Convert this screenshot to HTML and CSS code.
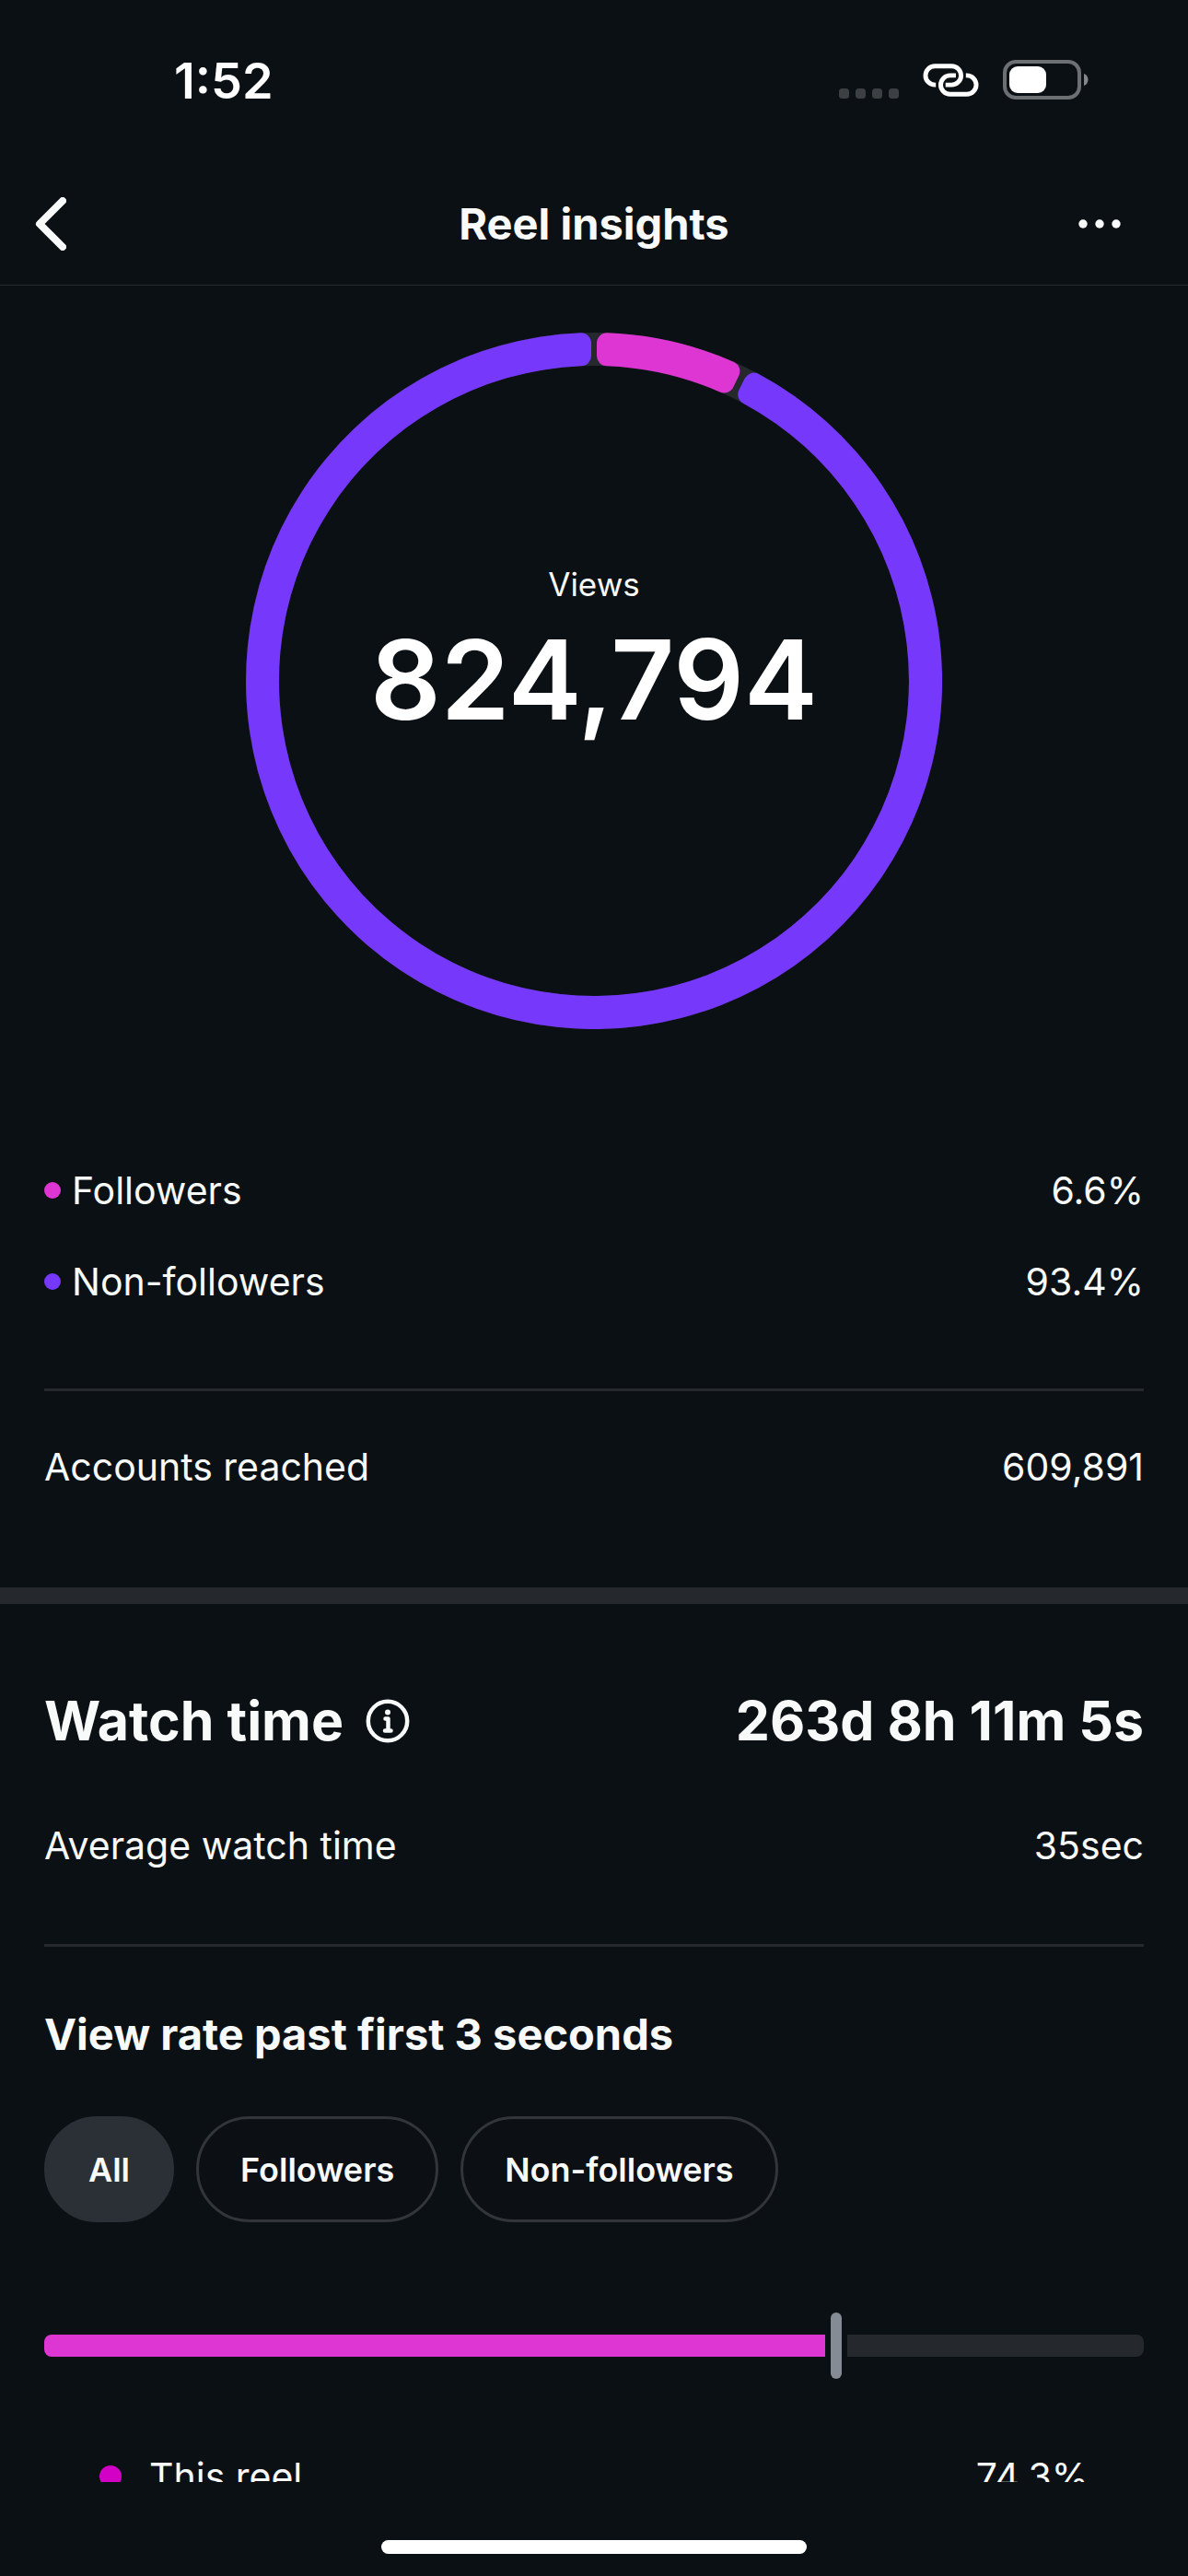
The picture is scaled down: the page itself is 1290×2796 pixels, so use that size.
FILE: index.html
```
<!DOCTYPE html>
<html lang="en">
<head>
    <meta charset="UTF-8">
    <meta name="viewport" content="width=device-width, initial-scale=1.0">
    <title>Reel insights</title>
    <link rel="stylesheet" href="styles.css">
</head>
<body>
    <div class="status-bar">
        <span class="time">1:52</span>
        <div class="status-icons">
            <svg class="signal" viewBox="0 0 65 43" aria-hidden="true">
                <rect x="0" y="31" width="11" height="11" rx="3.5"/>
                <rect x="18" y="31" width="11" height="11" rx="3.5"/>
                <rect x="36" y="31" width="11" height="11" rx="3.5"/>
                <rect x="54" y="31" width="11" height="11" rx="3.5"/>
            </svg>
            <svg class="link-icon" viewBox="0 0 185 109" aria-hidden="true">
                <path d="M43 70H40A31 31 0 0 1 40 8H95A31 31 0 0 1 95 70H75"/>
                <path d="M109 39H90A31 31 0 0 0 90 101H145A31 31 0 0 0 145 39H142"/>
            </svg>
            <svg class="battery" viewBox="0 0 93 43" aria-hidden="true">
                <rect class="battery-case" x="2" y="2" width="81" height="39" rx="12"/>
                <rect class="battery-level" x="7" y="7" width="40" height="29" rx="9"/>
                <path class="battery-tip" d="M88 15C94 17 94 26 88 28Z"/>
            </svg>
        </div>
    </div>

    <header class="header">
        <button class="icon-button back" aria-label="Back">
            <svg class="back-icon" viewBox="0 0 34 58"><path d="M30 4L5 29L30 54"/></svg>
        </button>
        <h1>Reel insights</h1>
        <button class="icon-button more" aria-label="More options">
            <svg class="more-icon" viewBox="0 0 46 10">
                <circle cx="5" cy="5" r="4.7"/>
                <circle cx="23" cy="5" r="4.7"/>
                <circle cx="41" cy="5" r="4.7"/>
            </svg>
        </button>
    </header>

    <main class="content">
        <section class="views">
            <div class="ring">
                <svg class="ring-chart" viewBox="0 0 756 756" aria-hidden="true">
                    <circle class="ring-track" cx="378" cy="378" r="360"/>
                    <path class="ring-followers" d="M381 11A11 11 0 0 1 392 0.3A378 378 0 0 1 530.1 32A11 11 0 0 1 535.4 46.5L529.4 59.1A11 11 0 0 1 514.7 64.5A342 342 0 0 0 392 36.3A11 11 0 0 1 381 25Z"/>
                    <path class="ring-others" d="M541.8 49.6A11 11 0 0 1 556.5 44.8A378 378 0 1 1 364 0.3A11 11 0 0 1 375 11L375 25A11 11 0 0 1 364 36.3A342 342 0 1 0 540.3 77A11 11 0 0 1 535.5 62.1Z"/>
                </svg>
                <div class="ring-label">
                    <span class="ring-title">Views</span>
                    <strong class="ring-value">824,794</strong>
                </div>
            </div>

            <div class="legend">
                <div class="row">
                    <span class="name"><i class="dot pink"></i>Followers</span>
                    <span>6.6%</span>
                </div>
                <div class="row">
                    <span class="name"><i class="dot purple"></i>Non-followers</span>
                    <span>93.4%</span>
                </div>
            </div>
            <hr>
            <div class="row reached">
                <span>Accounts reached</span>
                <span>609,891</span>
            </div>
        </section>

        <section class="watch">
            <div class="watch-head">
                <h2>Watch time</h2>
                <button class="icon-button" aria-label="About watch time">
                    <svg class="info-icon" viewBox="0 0 48 48">
                        <circle cx="24" cy="24" r="21.2"/>
                        <path d="M21.5 21.5H24.5V34M21 34.5H27.5"/>
                        <circle class="info-dot" cx="24" cy="14.5" r="3"/>
                    </svg>
                </button>
                <span class="watch-total">263d 8h 11m 5s</span>
            </div>
            <div class="row">
                <span>Average watch time</span>
                <span>35sec</span>
            </div>
            <hr>

            <h3>View rate past first 3 seconds</h3>
            <div class="filters">
                <button class="filter active" aria-pressed="true">All</button>
                <button class="filter" aria-pressed="false">Followers</button>
                <button class="filter" aria-pressed="false">Non-followers</button>
            </div>

            <div class="rate-bar">
                <div class="rate-fill" style="width: 71%"></div>
                <div class="rate-marker"></div>
                <div class="rate-rest"></div>
            </div>
            <div class="row rate-row">
                <span class="name"><i class="dot magenta"></i>This reel</span>
                <span>74.3%</span>
            </div>
        </section>
    </main>

    <footer class="home-bar">
        <div class="home-indicator"></div>
    </footer>
</body>
</html>
```

FILE: styles.css
```
* {
    margin: 0;
    padding: 0;
    box-sizing: border-box;
}

body {
    height: 100vh;
    display: flex;
    flex-direction: column;
    overflow: hidden;
    background: #0b1014;
    color: #f8f9f9;
    font-family: Inter, "Liberation Sans", sans-serif;
    font-size: 41px;
    line-height: 54px;
}

button {
    font: inherit;
    color: inherit;
    border: none;
    background: none;
    cursor: pointer;
}

svg {
    display: block;
}

/* Status bar */
.status-bar {
    flex: none;
    height: 176px;
    padding: 0 108px 0 189px;
    display: flex;
    align-items: center;
    justify-content: space-between;
    color: #fff;
}

.time {
    font-size: 54px;
    font-weight: 600;
}

.status-icons {
    display: flex;
    align-items: center;
    gap: 26px;
    padding-bottom: 3px;
}

.signal {
    width: 65px;
    height: 43px;
    fill: #3c4043;
}

.link-icon {
    width: 61px;
    height: 36px;
    fill: none;
    stroke: #fff;
    stroke-width: 15;
}

.battery {
    width: 93px;
    height: 43px;
}

.battery-case {
    fill: none;
    stroke: #6c7072;
    stroke-width: 4;
}

.battery-level {
    fill: #fff;
}

.battery-tip {
    fill: #85888a;
}

/* Header */
.header {
    flex: none;
    height: 134px;
    padding: 0 38px;
    display: grid;
    grid-template-columns: 1fr auto 1fr;
    align-items: center;
    border-bottom: 1px solid #25282d;
}

.back {
    justify-self: start;
}

.more {
    justify-self: end;
    padding-right: 35px;
}

h1 {
    font-size: 47px;
    font-weight: 700;
}

.back-icon {
    width: 34px;
    height: 58px;
    fill: none;
    stroke: #f8f9f9;
    stroke-width: 8;
    stroke-linecap: round;
    stroke-linejoin: round;
}

.more-icon {
    width: 46px;
    height: 10px;
    fill: #f8f9f9;
}

/* Scrolling content */
.content {
    flex: 1;
    min-height: 0;
    overflow: hidden;
}

.row {
    display: flex;
    justify-content: space-between;
}

.name {
    display: flex;
    align-items: center;
}

hr {
    height: 3px;
    border: none;
    background: #25282d;
}

.dot {
    width: 18px;
    height: 18px;
    margin-right: 12px;
    border-radius: 50%;
}

.pink {
    background: #dd36d2;
}

.purple {
    background: #7638fa;
}

.magenta {
    width: 24px;
    height: 24px;
    margin-right: 30px;
    background: #d300c5;
}

/* Views */
.views {
    padding: 51px 48px 104px;
    border-bottom: 18px solid #25282d;
}

.ring {
    width: 756px;
    max-width: 100%;
    margin: 0 auto 148px;
    display: grid;
    place-items: center;
}

.ring-chart,
.ring-label {
    grid-area: 1 / 1;
}

.ring-chart {
    width: 100%;
}

.ring-track {
    fill: none;
    stroke: #25282d;
    stroke-width: 36;
}

.ring-followers {
    fill: #dd36d2;
}

.ring-others {
    fill: #7638fa;
}

.ring-label {
    display: flex;
    flex-direction: column;
    align-items: center;
    gap: 8px;
    padding-bottom: 58px;
}

.ring-title {
    font-size: 35px;
    line-height: 48px;
}

.ring-value {
    font-size: 120px;
    line-height: 144px;
    font-weight: 600;
    color: #fff;
}

.legend {
    display: flex;
    flex-direction: column;
    gap: 45px;
    margin-bottom: 89px;
}

.reached {
    margin-top: 55px;
}

/* Watch time */
.watch {
    padding: 91px 48px 0;
}

.watch-head {
    display: flex;
    align-items: center;
    gap: 24px;
    margin-bottom: 72px;
}

h2,
.watch-total {
    font-size: 59px;
    line-height: 72px;
    font-weight: 700;
}

.watch-total {
    margin-left: auto;
}

.info-icon {
    width: 48px;
    height: 48px;
    fill: none;
    stroke: #f8f9f9;
    stroke-width: 4.5;
    stroke-linecap: round;
    stroke-linejoin: round;
}

.info-icon .info-dot {
    fill: #f8f9f9;
    stroke: none;
}

.watch hr {
    margin: 80px 0 65px;
}

h3 {
    font-size: 47px;
    line-height: 60px;
    font-weight: 700;
}

.filters {
    display: flex;
    gap: 24px;
    margin: 59px 0 98px;
}

.filter {
    height: 115px;
    padding: 0 45px;
    border: 3px solid #323539;
    border-radius: 58px;
    background: #0c0f14;
    font-size: 36px;
    font-weight: 600;
}

.filter.active {
    border-color: #2b3036;
    background: #2b3036;
}

.rate-bar {
    display: flex;
    align-items: center;
    gap: 6px;
    margin-bottom: 79px;
}

.rate-fill,
.rate-rest {
    height: 24px;
}

.rate-fill {
    border-radius: 8px 0 0 8px;
    background: #dd36d2;
}

.rate-marker {
    width: 12px;
    height: 72px;
    border-radius: 6px;
    background: #858b94;
}

.rate-rest {
    flex: 1;
    border-radius: 0 8px 8px 0;
    background: #25282d;
}

.rate-row {
    padding: 0 60px;
}

/* Home indicator */
.home-bar {
    flex: none;
    height: 102px;
    padding-bottom: 24px;
    display: flex;
    align-items: flex-end;
    justify-content: center;
}

.home-indicator {
    width: 462px;
    height: 15px;
    border-radius: 8px;
    background: #fff;
}
```
